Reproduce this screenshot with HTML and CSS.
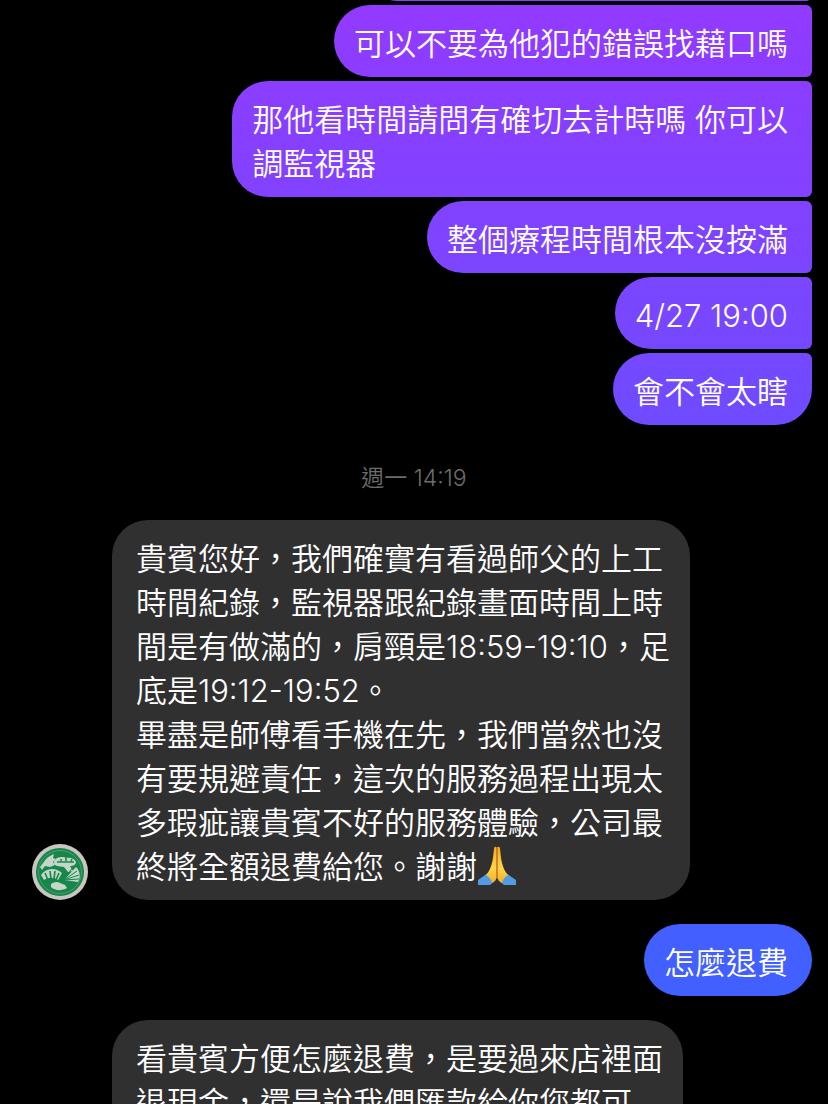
FILE: index.html
```
<!DOCTYPE html>
<html lang="zh-Hant">
<head>
    <meta charset="UTF-8">
    <meta name="viewport" content="width=device-width, initial-scale=1.0">
    <title>Chat</title>
    <link rel="stylesheet" href="styles.css">
</head>
<body>
    <main class="chat">
        <div class="group sent">
            <div class="bubble previous"></div>
            <div class="bubble">可以不要為他犯的錯誤找藉口嗎</div>
            <div class="bubble">那他看時間請問有確切去計時嗎 你可以<br>調監視器</div>
            <div class="bubble">整個療程時間根本沒按滿</div>
            <div class="bubble">4/27 19:00</div>
            <div class="bubble last">會不會太瞎</div>
        </div>

        <time class="timestamp">週一 14:19</time>

        <div class="group received">
            <svg class="avatar" viewBox="0 0 56 56" role="img" aria-label="店家">
                <circle cx="28" cy="28" r="28" fill="#c9c5bf"/>
                <circle cx="28" cy="28" r="24" fill="#17864a"/>
                <circle cx="28" cy="28" r="21.5" fill="none" stroke="#4f9c70" stroke-width="1"/>
                <g fill="#c3d6c8">
                    <path d="M14 15c2-2 5-4 8-5l-1 4 3 1-3 3 2 3-5 2-5-1-3 4-2-3z"/>
                    <path d="M23 16c3-4 9-3 11-2 5-1 9 1 10 4 0 3-3 4-6 4l3 5-5 1-4-5-7-1c-3-1-4-4-2-6z"/>
                    <path d="M9 31c5-7 14-8 21-2l-4 7c-4-3-10-3-14 0z"/>
                    <path d="M32 36l12-13c4 4 5 10 2 15z"/>
                    <path d="M19 40c3-2 6-3 9-1l5 2 2 3c-5 3-12 3-16-1z"/>
                </g>
                <g fill="none" stroke="#17864a">
                    <path d="M13 29l3 7M18 27l1 8M23 27l-1 8M27 29l-3 7" stroke-width="1.6"/>
                    <path d="M32 36l9-13M32 36l13-9M32 36l15-5M32 36l15-1" stroke-width="1"/>
                    <path d="M25 18h17M29 17v-2M34 17v-3M39 17l1-2" stroke-width="1.6"/>
                </g>
            </svg>
            <div class="bubble">貴賓您好，我們確實有看過師父的上工<br>時間紀錄，監視器跟紀錄畫面時間上時<br>間是有做滿的，肩頸是18:59-19:10，足<br>底是19:12-19:52。<br>畢盡是師傅看手機在先，我們當然也沒<br>有要規避責任，這次的服務過程出現太<br>多瑕疵讓貴賓不好的服務體驗，公司最<br>終將全額退費給您。謝謝<svg class="emoji" viewBox="0 0 40 40" role="img" aria-label="合掌">
                <defs>
                    <linearGradient id="skin" x2="0" y2="1">
                        <stop offset="0" stop-color="#f5ae20"/>
                        <stop offset="0.6" stop-color="#ffd34c"/>
                        <stop offset="1" stop-color="#f5ad24"/>
                    </linearGradient>
                </defs>
                <path d="M1 34l10-7 8 7-6 5H1z" fill="#539ce4"/>
                <path d="M39 34l-10-7-8 7 6 5h12z" fill="#539ce4"/>
                <path d="M9 29c4-4 6-11 7-17l1-9c0-3 3-3 3 0v27c0 3-3 6-5 7-1-4-3-6-6-8z" fill="url(#skin)"/>
                <path d="M31 29c-4-4-6-11-7-17l-1-9c0-3-3-3-3 0v27c0 3 3 6 5 7 1-4 3-6 6-8z" fill="url(#skin)"/>
                <path d="M20 2v29" fill="none" stroke="#b96b12" stroke-width="1.4"/>
            </svg></div>
        </div>

        <div class="group sent">
            <div class="bubble single">怎麼退費</div>
        </div>

        <div class="group received">
            <div class="bubble">看貴賓方便怎麼退費，是要過來店裡面<br>退現金，還是說我們匯款給你您都可</div>
        </div>
    </main>
</body>
</html>
```
FILE: styles.css
```
body {
    margin: 0;
    background-color: #000;
    color: #fff;
    font-family: Inter, "Noto Sans CJK TC", sans-serif;
    font-size: 31px;
    font-weight: 350;
    line-height: 44px;
}
.chat {
    display: flex;
    flex-direction: column;
    gap: 24px;
    height: 100vh;
    overflow: hidden;
}
.group {
    display: flex;
    flex-shrink: 0;
}
.bubble {
    white-space: nowrap;
    border-radius: 36px;
}
.sent {
    flex-direction: column;
    align-items: flex-end;
    gap: 4px;
    padding-right: 16px;
}
.sent .bubble {
    padding: 17px 24px 11px 20px;
    border-radius: 36px 6px 6px 36px;
    background: linear-gradient(#923aff 0%, #6f4bff 38%, #4160ff 87%) fixed;
}
.sent .last {
    border-bottom-right-radius: 36px;
}
.sent .single {
    border-radius: 36px;
}
/* end of the message scrolled off the top */
.sent .previous {
    box-sizing: border-box;
    width: 450px;
    height: 72px;
    margin-top: -71px;
}
.timestamp {
    align-self: center;
    padding-top: 11px;
    color: #6c6c6c;
    font-size: 23px;
    line-height: 36px;
}
.received {
    align-items: flex-end;
    padding-left: 112px;
    position: relative;
}
.received .bubble {
    padding: 17px 20px 11px 24px;
    background-color: #303030;
}
.avatar {
    position: absolute;
    left: 32px;
    bottom: 0;
    width: 56px;
    height: 56px;
}
.emoji {
    width: 40px;
    height: 40px;
    vertical-align: -8px;
}
```
